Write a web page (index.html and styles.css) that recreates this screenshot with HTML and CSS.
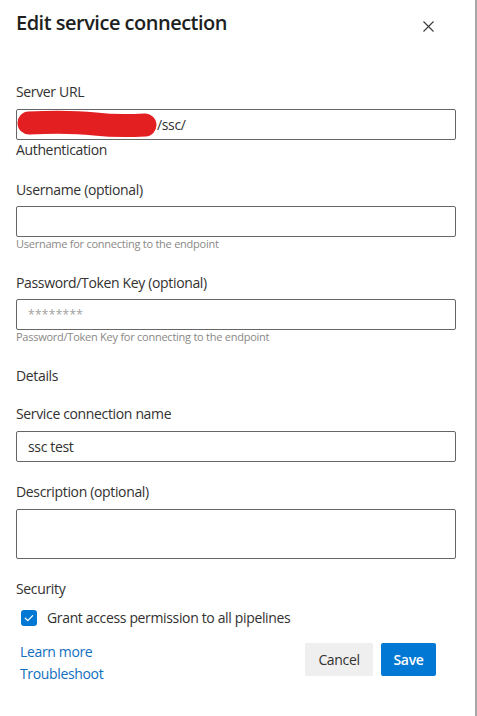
FILE: index.html
```html
<!DOCTYPE html>
<html lang="en">
<head>
<meta charset="utf-8">
<title>Edit service connection</title>
<link rel="stylesheet" href="styles.css">
</head>
<body>
<div class="panel">
  <div class="header">
    <h1 class="title">Edit service connection</h1>
    <button class="close" aria-label="Close">
      <svg width="11" height="11" viewBox="0 0 11 11"><path d="M0.5 0.5 L10.5 10.5 M10.5 0.5 L0.5 10.5" stroke="#3b3a39" stroke-width="1.1" fill="none"/></svg>
    </button>
  </div>

  <div class="field field-server">
    <label class="label">Server URL</label>
    <div class="input input-url">
      <span class="redact"><svg width="140" height="29" viewBox="0 0 140 29"><path d="M12 13 C 30 12, 60 12, 78 14 C 95 16, 110 16, 128 15" stroke="#e41f22" stroke-width="23" stroke-linecap="round" fill="none"/></svg></span><span class="value">/ssc/</span>
    </div>
  </div>
  <div class="section">Authentication</div>

  <div class="field field-user">
    <label class="label">Username (optional)</label>
    <div class="input"></div>
    <div class="help">Username for connecting to the endpoint</div>
  </div>

  <div class="field field-pass">
    <label class="label">Password/Token Key (optional)</label>
    <div class="input"><span class="placeholder">********</span></div>
    <div class="help">Password/Token Key for connecting to the endpoint</div>
  </div>

  <div class="section section-details">Details</div>

  <div class="field field-name">
    <label class="label">Service connection name</label>
    <div class="input"><span class="value">ssc test</span></div>
  </div>

  <div class="field field-desc">
    <label class="label">Description (optional)</label>
    <div class="input textarea"></div>
  </div>

  <div class="section section-security">Security</div>
  <div class="check-row">
    <span class="checkbox"><svg width="16" height="16" viewBox="0 0 16 16"><path d="M4.3 8.2 L6.8 10.6 L11.7 5.6" stroke="#fff" stroke-width="1.3" fill="none" stroke-linecap="round" stroke-linejoin="round"/></svg></span>
    <span class="check-label">Grant access permission to all pipelines</span>
  </div>

  <div class="footer">
    <div class="links">
      <a class="link" href="#">Learn more</a>
      <a class="link" href="#">Troubleshoot</a>
    </div>
    <div class="buttons">
      <button class="btn btn-cancel">Cancel</button>
      <button class="btn btn-save">Save</button>
    </div>
  </div>
</div>
</body>
</html>
```

FILE: styles.css
```css
* { box-sizing: border-box; }
html, body { margin: 0; padding: 0; background: #fff; }
body {
  font-family: "Open Sans", "Noto Sans", "DejaVu Sans", sans-serif;
  color: #323130;
  font-size: 14px;
  letter-spacing: -0.35px;
}
.panel {
  width: 477px;
  height: 716px;
  border-right: 2px solid #a6a6a6;
  padding: 9px 19px 0 16px;
}
.header {
  display: flex;
  justify-content: space-between;
  align-items: flex-start;
  margin-bottom: 45px;
}
.title {
  margin: 0;
  font-size: 20px;
  font-weight: 600;
  line-height: 28px;
  letter-spacing: -0.5px;
  color: #201f1e;
}
.close {
  width: 20px;
  height: 20px;
  margin: 7.5px 17.5px 0 0;
  padding: 0;
  border: 0;
  background: transparent;
  display: flex;
  align-items: center;
  justify-content: center;
}
.label {
  display: block;
  line-height: 20px;
  margin-bottom: 6px;
  color: #323130;
}
.field-server .label, .field-name .label, .field-desc .label { margin-bottom: 7px; }
.input {
  height: 31px;
  border: 1px solid #666;
  border-radius: 2px;
  padding: 0 11px;
  display: flex;
  align-items: center;
  line-height: 20px;
}
.input-url { padding-left: 0; }
.redact { display: inline-block; width: 140px; height: 29px; }
.redact svg { display: block; }
.value { color: #323130; }
.placeholder { color: #a19f9d; font-size: 12px; letter-spacing: 0.3px; }
.textarea { height: 50px; }
.help {
  font-size: 11px;
  line-height: 14px;
  letter-spacing: -0.25px;
  color: #8a8886;
}
.section { line-height: 20px; }
.field-user { margin-top: 20px; }
.field-pass { margin-top: 22px; }
.section-details { margin-top: 22px; }
.field-name { margin-top: 18px; }
.field-desc { margin-top: 20px; }
.section-security { margin-top: 20px; }
.check-row {
  margin-top: 9px;
  display: flex;
  align-items: center;
  height: 20px;
  padding-left: 5px;
}
.checkbox {
  width: 16px;
  height: 16px;
  border-radius: 3px;
  background: #0078d4;
  display: block;
}
.checkbox svg { display: block; }
.check-label { margin-left: 10px; line-height: 20px; color: #323130; }
.footer {
  margin-top: 13px;
  display: flex;
  justify-content: space-between;
  align-items: flex-start;
}
.links {
  display: flex;
  flex-direction: column;
  padding-left: 4px;
}
.link {
  line-height: 22px;
  color: #106ebe;
  text-decoration: none;
}
.buttons {
  display: flex;
  gap: 8px;
  margin-top: 2px;
  margin-right: 20px;
}
.btn {
  height: 33px;
  border: 0;
  border-radius: 2px;
  font-family: inherit;
  font-size: 14px;
  letter-spacing: -0.35px;
  padding: 0;
  line-height: 20px;
}
.btn-cancel { background: #efefef; color: #323130; width: 68px; }
.btn-save { background: #0078d4; color: #fff; font-weight: 600; width: 55px; }
```
